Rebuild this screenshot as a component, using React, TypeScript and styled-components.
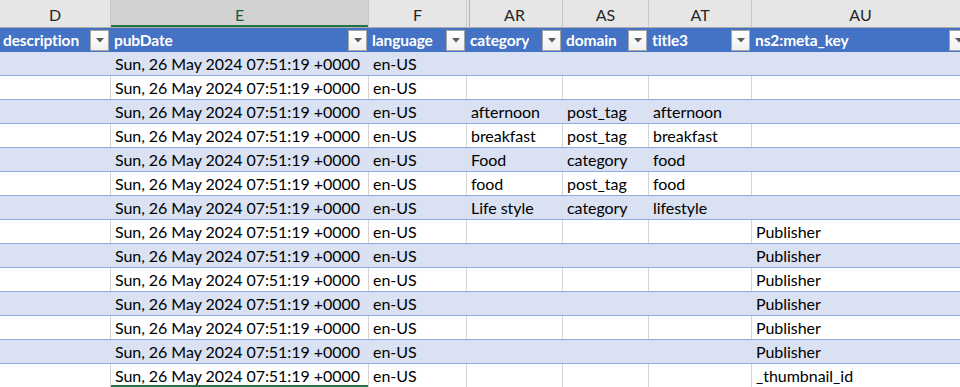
import React from 'react';
import styled, { createGlobalStyle, css } from 'styled-components';

const GlobalStyle = createGlobalStyle`
  html, body { margin: 0; padding: 0; background: #ffffff; }
  body { font-family: Lato, "Open Sans", "Liberation Sans", sans-serif; }
`;

type Col = { key: string; width: number; title: string };

const COLS: Col[] = [
  { key: 'D', width: 111, title: 'description' },
  { key: 'E', width: 258, title: 'pubDate' },
  { key: 'F', width: 98, title: 'language' },
  { key: 'AR', width: 96, title: 'category' },
  { key: 'AS', width: 86, title: 'domain' },
  { key: 'AT', width: 103, title: 'title3' },
  { key: 'AU', width: 218, title: 'ns2:meta_key' },
];

const TEMPLATE = COLS.map((c) => `${c.width}px`).join(' ');

const DATE = 'Sun, 26 May 2024 07:51:19 +0000';

const EXTRA: Array<[string, string, string, string]> = [
  ['', '', '', ''],
  ['', '', '', ''],
  ['afternoon', 'post_tag', 'afternoon', ''],
  ['breakfast', 'post_tag', 'breakfast', ''],
  ['Food', 'category', 'food', ''],
  ['food', 'post_tag', 'food', ''],
  ['Life style', 'category', 'lifestyle', ''],
  ['', '', '', 'Publisher'],
  ['', '', '', 'Publisher'],
  ['', '', '', 'Publisher'],
  ['', '', '', 'Publisher'],
  ['', '', '', 'Publisher'],
  ['', '', '', 'Publisher'],
  ['', '', '', '_thumbnail_id'],
];

const ROWS: string[][] = EXTRA.map((e) => ['', DATE, 'en-US', ...e]);

const Sheet = styled.div`
  width: 960px;
  height: 387px;
  overflow: hidden;
  background: #ffffff;
  color: #000000;
  font-size: 16px;
`;

const GridRow = styled.div`
  display: grid;
  grid-template-columns: ${TEMPLATE};
  width: max-content;
`;

const LetterRow = styled(GridRow)`
  height: 28px;
  background: #e6e6e6;
  border-bottom: 1px solid #ababab;
  box-sizing: border-box;
`;

const LetterCell = styled.div<{ $selected?: boolean; $hiddenBefore?: boolean }>`
  box-sizing: border-box;
  display: flex;
  align-items: center;
  justify-content: center;
  height: 27px;
  padding-top: 1px;
  font-size: 16px;
  color: #262626;
  border-right: 1px solid #c8c8c8;
  ${(p) =>
    p.$selected &&
    css`
      background: #d2d2d2;
      color: #185c37;
      box-shadow: inset 0 -2px 0 #217346;
    `}
  ${(p) =>
    p.$hiddenBefore &&
    css`
      box-shadow: inset 2px 0 0 #e6e6e6, inset 3px 0 0 #b3b3b3;
    `}
`;

const HeaderRow = styled(GridRow)`
  height: 24px;
  background: #4472c4;
`;

const HeaderCell = styled.div`
  box-sizing: border-box;
  display: flex;
  align-items: center;
  justify-content: space-between;
  padding: 0 2px 0 3px;
  min-width: 0;
  color: #ffffff;
  font-weight: 700;
  font-size: 15.5px;
  letter-spacing: -0.1px;
  white-space: nowrap;
`;

const HeaderText = styled.span`
  overflow: hidden;
`;

const FilterButton = styled.div`
  box-sizing: border-box;
  flex: none;
  width: 19px;
  height: 21px;
  border: 1px solid #a6a6a6;
  background: linear-gradient(#ffffff, #f0f0f0);
  display: flex;
  align-items: center;
  justify-content: center;
`;

const DataRow = styled(GridRow)<{ $band: boolean }>`
  height: 24px;
  background: ${(p) => (p.$band ? '#d9e1f2' : '#ffffff')};
  border-bottom: 1px solid #8ea9db;
  box-sizing: border-box;
`;

const DataCell = styled.div<{ $band: boolean; $active?: boolean }>`
  box-sizing: border-box;
  display: flex;
  align-items: flex-end;
  padding: 0 0 3px 4px;
  line-height: 16px;
  font-size: 16px;
  letter-spacing: -0.05px;
  white-space: nowrap;
  overflow: hidden;
  border-right: 1px solid ${(p) => (p.$band ? 'transparent' : '#d4d4d4')};
  ${(p) =>
    p.$active &&
    css`
      box-shadow: inset 0 -2px 0 #217346;
    `}
`;

const Arrow = () => (
  <svg width="8" height="5" viewBox="0 0 8 5" aria-hidden="true">
    <path d="M0 0 H8 L4 4.5 Z" fill="#5a5a5a" />
  </svg>
);

export default function App() {
  return (
    <Sheet>
      <GlobalStyle />
      <LetterRow>
        {COLS.map((c) => (
          <LetterCell key={c.key} $selected={c.key === 'E'} $hiddenBefore={c.key === 'AR'}>
            {c.key}
          </LetterCell>
        ))}
      </LetterRow>
      <HeaderRow>
        {COLS.map((c) => (
          <HeaderCell key={c.key}>
            <HeaderText>{c.title}</HeaderText>
            <FilterButton>
              <Arrow />
            </FilterButton>
          </HeaderCell>
        ))}
      </HeaderRow>
      {ROWS.map((row, i) => {
        const band = i % 2 === 0;
        const last = i === ROWS.length - 1;
        return (
          <DataRow key={i} $band={band}>
            {row.map((v, j) => (
              <DataCell key={j} $band={band} $active={last && j === 1}>
                {v}
              </DataCell>
            ))}
          </DataRow>
        );
      })}
    </Sheet>
  );
}
